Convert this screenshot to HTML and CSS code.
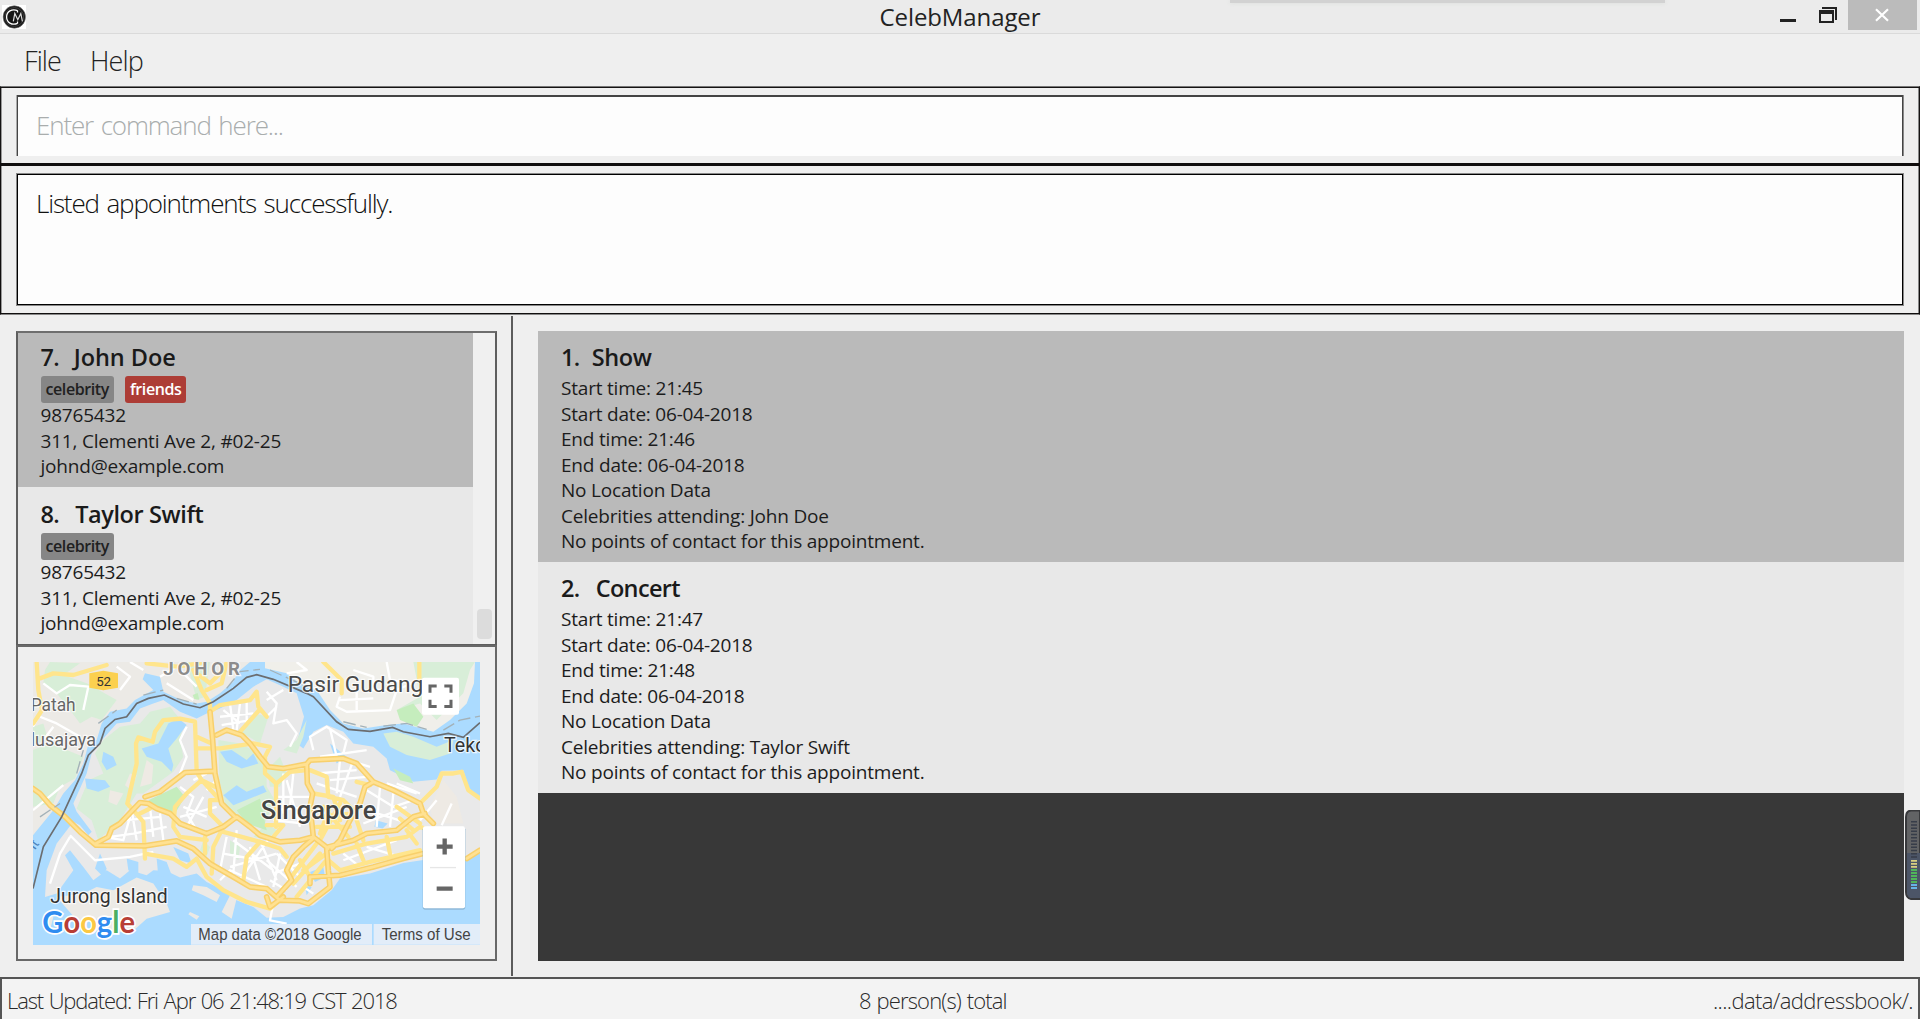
FILE: index.html
```html
<!DOCTYPE html>
<html lang="en">
<head>
<meta charset="utf-8">
<title>CelebManager</title>
<link rel="stylesheet" href="styles.css">
</head>
<body>
<header class="titlebar">
  <svg class="app-icon" width="24" height="24" viewBox="0 0 24 24"><rect width="24" height="24" fill="#fff"/><circle cx="12.3" cy="12" r="11.2" fill="#151515" stroke="#777" stroke-width=".6"/><circle cx="12.3" cy="12" r="9.4" fill="none" stroke="#555" stroke-width=".6"/><path d="M15.5 5.6C9.8 3.2 4.6 6.700 4.600 12s5.200 8.800 10.900 6.400M15.500 5.600v1.800M15.500 18.400v-1.800" fill="none" stroke="#fff" stroke-width="1.300"/><path d="M11.300 16.300l1.500-7.800 3 6.200 3-6.200 1.600 7.800" fill="none" stroke="#ddd" stroke-width="1.200"/></svg>
  <span class="app-title">CelebManager</span>
  <div class="window-buttons">
    <svg width="60" height="30" viewBox="0 0 60 30"><path d="M0 19h16v3H0z" fill="#222"/><path d="M42 7h15v13h-2V9H42z" fill="#222"/><path d="M39 10h15v13H39zM41 14v7h11v-7z" fill="#222" fill-rule="evenodd"/></svg>
    <span class="close"><svg width="16" height="14" viewBox="0 0 16 14"><path d="M2 1.300l12 11.400M14 1.300L2 12.700" stroke="#fff" stroke-width="2.200"/></svg></span>
  </div>
  <span class="tab-shadow"></span>
</header>
<nav class="menubar"><span>File</span><span>Help</span></nav>
<section class="command"><div class="field">Enter command here...</div></section>
<section class="result"><div class="display">Listed appointments successfully.</div></section>
<main class="content">
  <aside class="side">
    <div class="persons">
      <div class="person-list">
        <article class="person selected">
          <h2><b>7.</b><span class="name-john">John Doe</span></h2>
          <div class="tags"><span class="tag">celebrity</span><span class="tag friends">friends</span></div>
          <p>98765432</p><p>311, Clementi Ave 2, #02-25</p><p>johnd@example.com</p>
        </article>
        <article class="person">
          <h2 class="wide"><b>8.</b><span>Taylor Swift</span></h2>
          <div class="tags"><span class="tag">celebrity</span></div>
          <p>98765432</p><p>311, Clementi Ave 2, #02-25</p><p>johnd@example.com</p>
        </article>
      </div>
      <div class="scrollbar"><span class="thumb"></span></div>
    </div>
    <div class="map-panel">
      <svg class="map" viewBox="39 66 1341 848" preserveAspectRatio="none">
        <rect x="39" y="66" width="1341" height="848" fill="#abdbff"/>
        <g class="land">
          <path fill="#eceae6" d="M39 66H690L655 95 640 125 600 160 560 185 530 190 480 178 430 155 420 110 375 100 368 118 400 150 345 180 320 205 270 215 245 250 230 300 203 320 190 370 165 420 130 460 100 510 39 585Z"/>
          <path fill="#f0efea" d="M735 66H1365L1362 130 1340 190 1290 240 1240 275 1150 250 1100 255 1030 265 970 250 930 210 890 150 850 140 800 100 735 85Z"/>
          <path fill="#e9e9e9" d="M75 770L80 690 110 610 160 545 180 555 205 585 215 575 170 515 160 490 200 400 215 340 250 295 290 250 330 245 360 205 400 190 430 180 480 215 530 235 560 220 600 205 650 180 700 140 740 118 790 140 830 160 852 230 830 310 850 325 880 275 920 255 970 275 1000 310 1060 320 1100 355 1110 390 1180 425 1250 418 1265 392 1330 390 1345 440 1380 480V640L1330 655 1240 655 1150 668 1050 700 960 715 935 750 880 795 840 805 790 830 740 832 700 800 650 780 600 745 560 725 530 700 480 712 440 692 400 690 380 705 330 690 300 715 260 690 220 720 190 680 150 630 135 645 160 690 110 760Z"/>
          <path fill="#eceae6" d="M110 770L190 760 230 740 280 750 350 712 400 730 440 790 450 815 380 835 330 880 270 870 230 835 180 850 140 805ZM520 735L560 740 600 765 590 785 550 765 515 750ZM605 815L630 765 650 775 635 835ZM510 815L538 828 530 838 505 822ZM75 820L100 830 90 870 70 860Z"/>
        </g>
        <g fill="#d8eed8">
          <path d="M90 66L180 70 130 105 200 130 290 180 245 240 215 230 180 250 150 210 110 160 70 130 75 90ZM39 330L90 310 140 330 190 350 165 415 120 440 100 490 39 500ZM39 260L70 250 85 300 39 310Z"/>
          <path d="M250 300L300 260 360 250 390 215 450 200 490 250 480 300 490 350 460 395 370 460 350 460 300 540 235 600 215 540 170 505 205 420 250 400 225 340Z"/>
          <path d="M595 300L660 310 720 340 740 380 740 440 765 480 730 560 680 540 620 510 598 420ZM660 275L700 220 745 230 720 310ZM500 66L570 66 555 170 530 180Z"/>
          <path d="M1090 280L1130 275 1180 290 1250 320 1300 300 1290 340 1230 360 1160 345 1110 320ZM1130 210L1200 190 1250 240 1330 160 1350 90 1365 66H1180L1200 170ZM780 350L800 400 780 440 750 440 740 390ZM790 330L830 300 860 240 850 290 830 340ZM630 600L660 620 655 660 630 640ZM740 550L770 570 740 600 700 590ZM550 600L570 620 560 650 540 630Z"/>
        </g>
        <path fill="#c5edbd" d="M385 480L470 440 495 470 465 520 410 500ZM650 510L720 475 740 570 680 550ZM1130 210L1180 190 1210 230 1190 260 1140 240ZM1120 385L1170 410 1180 430 1140 420ZM518 165l15-6 5 20-15-2Z"/>
        <g fill="#eeeae4"><path d="M380 360L400 375 395 430 360 440ZM270 450l40 10-20 35-25-10ZM330 400l20 5-15 45-20-15ZM1270 420L1310 470 1330 550 1240 550 1230 500Z"/></g>
        <g fill="#abdbff">
          <path d="M250 335l30 15 10 25-30 15-15-25ZM195 415l60 5 15 20-35 15-35-10ZM365 325l50-15 30-60 30-15 25 20-30 40-25 30 15 50-5 20-30-30-45-15ZM600 335l35-5 45 30 20-20 15 30-50 15-45-20ZM610 465l40-30 30 20 50-20 10 20-50 20-50 20ZM240 640l20 45-10 25-25-25ZM320 655l35 10v40l-30-15ZM410 655l30 10 15 40-40 5ZM460 620l45 20 10 30-35-10ZM870 695l40-15 5 30-30 15ZM1068 540l35 10-15 15-25-5ZM930 310l50 40-30 20ZM855 735l20 5-15 25Z"/>
        </g>
        <g class="minor">
          <path d="M39 510L130 435M70 130L110 160 150 135 205 140 190 210M60 230L110 250 180 290M66 210L39 260M100 260L70 300M290 80L330 110 300 150M420 110L470 80 530 140M440 130L520 180M330 66L370 90M150 590L120 640 90 730M150 585L225 660 330 650 400 635M250 590L310 600 330 530M270 590L340 580 440 560M320 540L420 530M390 500L400 590M420 520L430 600M335 510L350 600M480 440L520 470 500 520M500 260L480 300 500 350 480 400M490 500L560 530M480 530L590 500M500 560L550 470M520 420L560 400M600 230L700 220M605 255L690 240M630 190L640 270M660 190L650 270M680 185L680 250M610 210L660 250M500 520L530 570M590 420L560 450M620 590L600 690M640 600L760 690M610 640L720 660M630 680L770 640M650 570L640 700M690 620L720 720M660 720L750 590M600 720L630 690 740 740M720 600L770 720M780 640L760 740"/>
          <path d="M740 155L770 190 760 250 800 240 830 280 810 320M770 200L740 230M740 180L790 150M800 100L860 90 830 66M960 170L950 200 980 215 1110 210 1130 150 1060 150 1060 110 1000 90M960 180L1060 175M1010 150V210M1100 66L1110 120 1180 130M1198 120L1130 150M880 330L870 290 920 260 980 300 970 340M930 265L950 350 1050 380M900 350L1040 330M890 400L1010 390M930 420L1040 410M960 360L950 460M1000 360L960 470M790 400L790 520M770 470H870M750 510L880 500M760 540L850 550M800 420L840 560M820 400L810 500M890 430L1010 470M1040 450L1120 500 1180 480M1080 440L1070 560M1120 460L1110 560M1040 510L1170 550M1030 550L1160 500M1100 430L1190 460M1130 430L1200 460M770 640L840 710M740 660L830 740M760 700L840 670M750 720L800 750M970 640L1020 680M1040 620L1140 650M970 660L1130 600M1250 480L1200 540M1295 490L1265 555M760 790L750 840 800 850M850 740L880 760"/>
        </g>
        <g class="arterial">
          <path d="M322 490L350 370 348 310 355 292 398 305 405 275 430 240 480 236 525 245 530 395 545 420 600 480 570 480V520L610 560M570 215L600 195 690 180 710 155 715 200 740 230M718 210L660 275M530 290L575 310M530 325H600L700 310 750 320 735 350V400L768 430V560M322 490L340 510 370 545 375 655M375 640L460 655 500 680 530 655 560 710 610 750 680 785 750 805 785 775M610 560L580 620 575 700M610 575L720 605 780 625 800 650M720 605L680 650 670 720M545 420L500 460 465 500 460 560 480 590 560 600M555 590V640M545 420L585 440M360 520L390 505M860 390L810 395 770 430M870 390L920 410 925 470 970 480 1000 510 1030 600M880 460L940 470 960 540M940 640L1040 610 1160 590 1200 560 1230 570M925 660L960 690 1050 665 1200 630M1010 610L1030 660M1100 590L1110 640M1160 570L1190 610M1205 485L1250 440 1265 400 1300 400 1325 395 1345 450 1380 475M910 500L985 590M960 490L900 600M820 730L900 640M830 770L915 665M840 660L870 710M900 530L1000 520M890 560L990 560M900 580L930 500M1010 425L1050 435M1140 535L1180 570M1130 500L1200 550M740 555H790L760 590M810 715L890 610M850 690L920 640"/>
          <path d="M50 66L55 150 66 210 40 250M60 115L100 100 160 105 260 75M380 70L470 80 540 70M520 90L545 150 570 190V215M560 150L605 130 620 66M530 100L570 130 610 90M910 66L965 120V160M1198 66V120"/>
        </g>
        <g class="highway">
          <path id="highways" d="M39 445L60 460 90 495 135 530 180 575 228 615 375 617 470 602 520 625 570 670 640 710 690 740 740 745 780 780 840 782 865 790 930 740 925 690 920 625M228 610L265 590 275 565 300 550 360 487 385 490 410 505 450 520 480 550 560 580 610 560 650 530 690 560 720 585 780 605 840 600 880 590 925 625M570 215L578 300 585 400 605 490 645 530M375 470L420 455 495 397 580 393M590 285L620 270 665 285 690 310 720 350 745 380 790 385 860 372 870 360 970 355 1010 370 1060 425 1120 450 1160 470 1200 490 1210 520 1240 550M860 372L862 430 878 460 870 500 880 590M925 620L1000 600 1040 580 1130 570 1180 530 1215 520M870 730V710L960 705 1060 680 1150 655 1210 640M1340 655L1380 630M1060 425L1035 440 1020 490 990 540 960 600 935 625M880 595L850 620 820 650 800 690 815 720 770 770M740 770L750 800 790 770"/>
          <use class="highway-core" href="#highways"/>
        </g>
        <path class="border-dash" d="M60 530L120 490M170 400L190 330M235 250L290 210M370 165L430 150M470 175L530 192M620 145L660 95 720 88M750 90L860 140M970 245L1040 262M1090 258L1160 250 1220 268M1270 270L1320 240 1380 228"/>
        <path class="border-line" d="M39 745L70 620 125 530 185 400 205 345 240 310 255 265 285 238 320 230 350 190 385 175 433 165 490 192 540 203 580 185 640 145 680 112 710 104 760 118 860 160 880 170 950 245 985 268 1050 274 1118 262 1150 275 1230 290 1285 280 1330 292 1380 248"/>
        <path d="M208 100L250 92 294 100V143L250 151 208 143Z" fill="#fbd04f"/>
        <g class="labels">
          <text x="229" y="138" font-size="40" textLength="44" stroke="none">52</text>
          <text x="430" y="104" font-size="56" font-weight="700" textLength="230" fill="#8c8c8c">JOHOR</text>
          <text x="32" y="213" font-size="55" textLength="135" lengthAdjust="spacingAndGlyphs" fill="#666">Patah</text>
          <text x="32" y="317" font-size="55" textLength="196" lengthAdjust="spacingAndGlyphs" fill="#666">lusajaya</text>
          <text x="45" y="630" font-size="42" fill="#4d83bb" stroke="none" transform="rotate(-55 45 630)">it</text>
          <text x="803" y="157" font-size="68" textLength="407" lengthAdjust="spacingAndGlyphs" fill="#4a4a4a">Pasir Gudang</text>
          <text x="1272" y="335" font-size="59" fill="#333">Teko</text>
          <text x="722" y="535" font-size="77" font-weight="500" textLength="347" lengthAdjust="spacingAndGlyphs" fill="#444">Singapore</text>
          <text x="91" y="789" font-size="59" textLength="352" lengthAdjust="spacingAndGlyphs" fill="#333">Jurong Island</text>
        </g>
        <text class="google" x="67" y="879" textLength="278" lengthAdjust="spacingAndGlyphs"><tspan fill="#2f8cf0">G</tspan><tspan fill="#b83e35">o</tspan><tspan fill="#fcc843">o</tspan><tspan fill="#2f8cf0">g</tspan><tspan fill="#4caf61">l</tspan><tspan fill="#b83e35">e</tspan></text>
        <rect x="1206" y="113" width="111" height="111" rx="6" fill="#fff"/>
        <path d="M1230 158V138H1250M1273 138H1293V158M1293 179V199H1273M1250 199H1230V179" fill="none" stroke="#666" stroke-width="9"/>
        <rect x="1208" y="561" width="128" height="247" rx="6" fill="#8fb9d8"/><rect x="1209" y="558" width="126" height="246" rx="6" fill="#fff"/>
        <path d="M1230 682H1308" stroke="#e6e6e6" stroke-width="4"/><path d="M1250 619H1298M1274 595V643M1250 745H1298" stroke="#666" stroke-width="13"/>
        <path d="M513 851H1056V913H513ZM1061 851H1380V913H1061Z" fill="#e2edf9"/>
        <g class="legal"><text x="535" y="900" textLength="490" lengthAdjust="spacingAndGlyphs">Map data ©2018 Google</text><text x="1085" y="900" textLength="267" lengthAdjust="spacingAndGlyphs">Terms of Use</text></g>
      </svg>
    </div>
  </aside>
  <section class="appointments">
    <article class="appointment selected">
      <h2 class="first"><b>1.</b><span>Show</span></h2>
      <p>Start time: 21:45</p><p>Start date: 06-04-2018</p><p>End time: 21:46</p><p>End date: 06-04-2018</p><p>No Location Data</p><p>Celebrities attending: John Doe</p><p>No points of contact for this appointment.</p>
    </article>
    <article class="appointment">
      <h2 class="wide"><b>2.</b><span class="concert">Concert</span></h2>
      <p>Start time: 21:47</p><p>Start date: 06-04-2018</p><p>End time: 21:48</p><p>End date: 06-04-2018</p><p>No Location Data</p><p>Celebrities attending: Taylor Swift</p><p>No points of contact for this appointment.</p>
    </article>
  </section>
  <svg class="meter" width="15" height="90" viewBox="0 0 15 90">
    <path d="M15 .5H6Q1 1 1 7V82Q1 88 6 89H15Z" fill="#626365" stroke="#38393c" stroke-width="2"/><path d="M2 43H15V88H6Q2 87 2 82Z" fill="#4c5567"/>
    <path d="M9 11V48" stroke="#373d49" stroke-width="6" stroke-dasharray="1.500 1.700"/><path d="M9 50V59" stroke="#d9d080" stroke-width="6" stroke-dasharray="1.700 1.300"/><path d="M9 59V74" stroke="#50b65a" stroke-width="6" stroke-dasharray="2 1"/><path d="M9 74V80" stroke="#67b4e6" stroke-width="6" stroke-dasharray="2 1"/>
  </svg>
</main>
<footer class="statusbar"><span class="updated">Last Updated: Fri Apr 06 21:48:19 CST 2018</span><span class="total">8 person(s) total</span><span class="path">....data/addressbook/.</span></footer>
</body>
</html>
```
FILE: styles.css
```css
* { box-sizing: border-box; }
body { margin: 0; width: 1920px; height: 1019px; overflow: hidden; display: flex; flex-direction: column; background: #efefef; color: #1c1c1c; font-family: "Open Sans", "Noto Sans", sans-serif; }
h2, p { margin: 0; white-space: nowrap; }

.titlebar { position: relative; height: 34px; flex: none; display: grid; grid-template-columns: 1fr auto 1fr; background: #ebebeb; border-bottom: 1px solid #dadada; }
.app-icon { margin: 5px 0 0 2px; }
.app-title { font-size: 24px; line-height: 34px; letter-spacing: -.1px; color: #222; }
.window-buttons { display: flex; justify-content: flex-end; gap: 8px; padding-right: 3px; }
.close { width: 69px; height: 30px; display: flex; align-items: center; justify-content: center; padding-right: 2px; background: #bbb; }
.tab-shadow { position: absolute; left: 1230px; top: 0; width: 435px; height: 3px; background: #d2d2d2; box-shadow: 0 0 4px #d8dcd8; }

.menubar { height: 52px; flex: none; display: flex; gap: 29px; padding: 0 24px; font-size: 27px; font-weight: 300; line-height: 53px; letter-spacing: -.9px; color: #222; }
.command { height: 77px; flex: none; padding: 8px 16px 7px; border: solid #151313; border-width: 1px 1px 0 1px; box-shadow: inset 0 1px #151313, inset 1px 0 #999, inset -1px 0 #888; border-top-color: #777; }
.field { height: 61px; padding-left: 18px; background: #fdfdfd; border: solid #444; border-width: 2px 1px 0; box-shadow: -1px 0 #aaa, 1px 0 #888; font-size: 26px; font-weight: 300; line-height: 57px; letter-spacing: -1.150px; word-spacing: 2px; color: #a9adad; }
.result { height: 152px; flex: none; padding: 8px 16px 9px; border: solid #100e0e; border-width: 3px 1px 1px; border-bottom-color: #888; box-shadow: inset 0 -1px #100e0e, inset 1px 0 #999, inset -1px 0 #888; }
.display { height: 131px; padding: 12px 0 0 18px; border: 1px solid #000; box-shadow: 0 0 0 1px #888; background: #fdfdfd; font-size: 26px; font-weight: 300; line-height: 32px; letter-spacing: -1.150px; word-spacing: 2px; color: #111; }

.content { position: relative; height: 662px; flex: none; display: flex; padding-right: 16px; }
.side { width: 513px; margin: 1px 0; padding: 15px 14px 16px 16px; border-right: 2px solid #5c5c5c; }
.persons { height: 314px; display: flex; background: #f0f0f0; border: 2px solid #5e5e5e; border-bottom-width: 1px; border-top-color: #6e6e6e; }
.person-list { width: 455px; }
.person { height: 157px; padding: 11px 0 0 22.500px; background: #e8e8e8; }
.person.selected { height: 154px; padding-top: 8px; background: #bababa; }
.scrollbar { flex: 1; display: flex; justify-content: center; align-items: flex-end; padding-bottom: 5px; }
.thumb { width: 15px; height: 30px; border-radius: 4px; background: #dcdcdc; }
h2 { display: flex; gap: 14.500px; font-size: 23.500px; line-height: 32px; font-weight: 600; letter-spacing: -.4px; color: #1a1a1a; }
h2 b { font-weight: 600; letter-spacing: -.6px; }
h2.first { gap: 12px; }
h2.wide { gap: 16px; }
.name-john { letter-spacing: -.050px; }
.concert { letter-spacing: -.650px; }
p { font-size: 19px; line-height: 25.500px; letter-spacing: -.2px; }
.tags { display: flex; gap: 11px; margin-top: 3px; height: 27px; }
.tag { height: 27px; padding: 0 5px; border-radius: 3px; background: #868686; font-size: 16px; line-height: 26px; font-weight: 600; letter-spacing: -.4px; color: #202020; }
.tag.friends { background: #ad3d36; color: #fff; }
.map-panel { height: 316px; padding: 15px; border: 2px solid #686868; }
.map { display: block; width: 447px; height: 283px; }

.minor { fill: none; stroke: #fff; stroke-width: 7; stroke-linejoin: round; }
.arterial, .highway { fill: none; stroke-linejoin: round; stroke-linecap: round; }
.arterial { stroke: #ffe58c; stroke-width: 13; }
.highway { stroke: #f8d06c; stroke-width: 17; }
.highway-core { stroke: #ffe192; stroke-width: 8; }
.border-dash { fill: none; stroke: #a3b1b8; stroke-width: 4; stroke-dasharray: 38 14; }
.border-line { fill: none; stroke: #6b6d70; stroke-width: 5; }
.labels { font-family: Roboto, sans-serif; fill: #333; stroke: #fff; stroke-opacity: .75; stroke-width: 7; paint-order: stroke; }
.google { font: 700 92px Lato, sans-serif; stroke: #fff; stroke-width: 10; paint-order: stroke; }
.legal { font: 47px "Liberation Sans", sans-serif; fill: #444; }

.appointments { width: 1366px; margin: 16px 0 16px 25px; background: #383838; }
.appointment { height: 231px; padding: 10px 0 0 23px; background: #e8e8e8; }
.appointment.selected { background: #bababa; }
.appointment h2 { margin-bottom: 3px; }
.meter { position: absolute; right: 0; top: 495px; }

.statusbar { flex: 1; display: grid; grid-template-columns: 852px auto 1fr; padding: 0 5px 0 5px; background: #f3f3f3; border: solid #555; border-width: 2px 2px 0; font-size: 22px; font-weight: 300; line-height: 43px; white-space: nowrap; color: #2a2a2a; }
.updated { letter-spacing: -1.120px; word-spacing: 1px; }
.total { letter-spacing: -.860px; word-spacing: 1px; }
.path { text-align: right; letter-spacing: -.610px; }
```
